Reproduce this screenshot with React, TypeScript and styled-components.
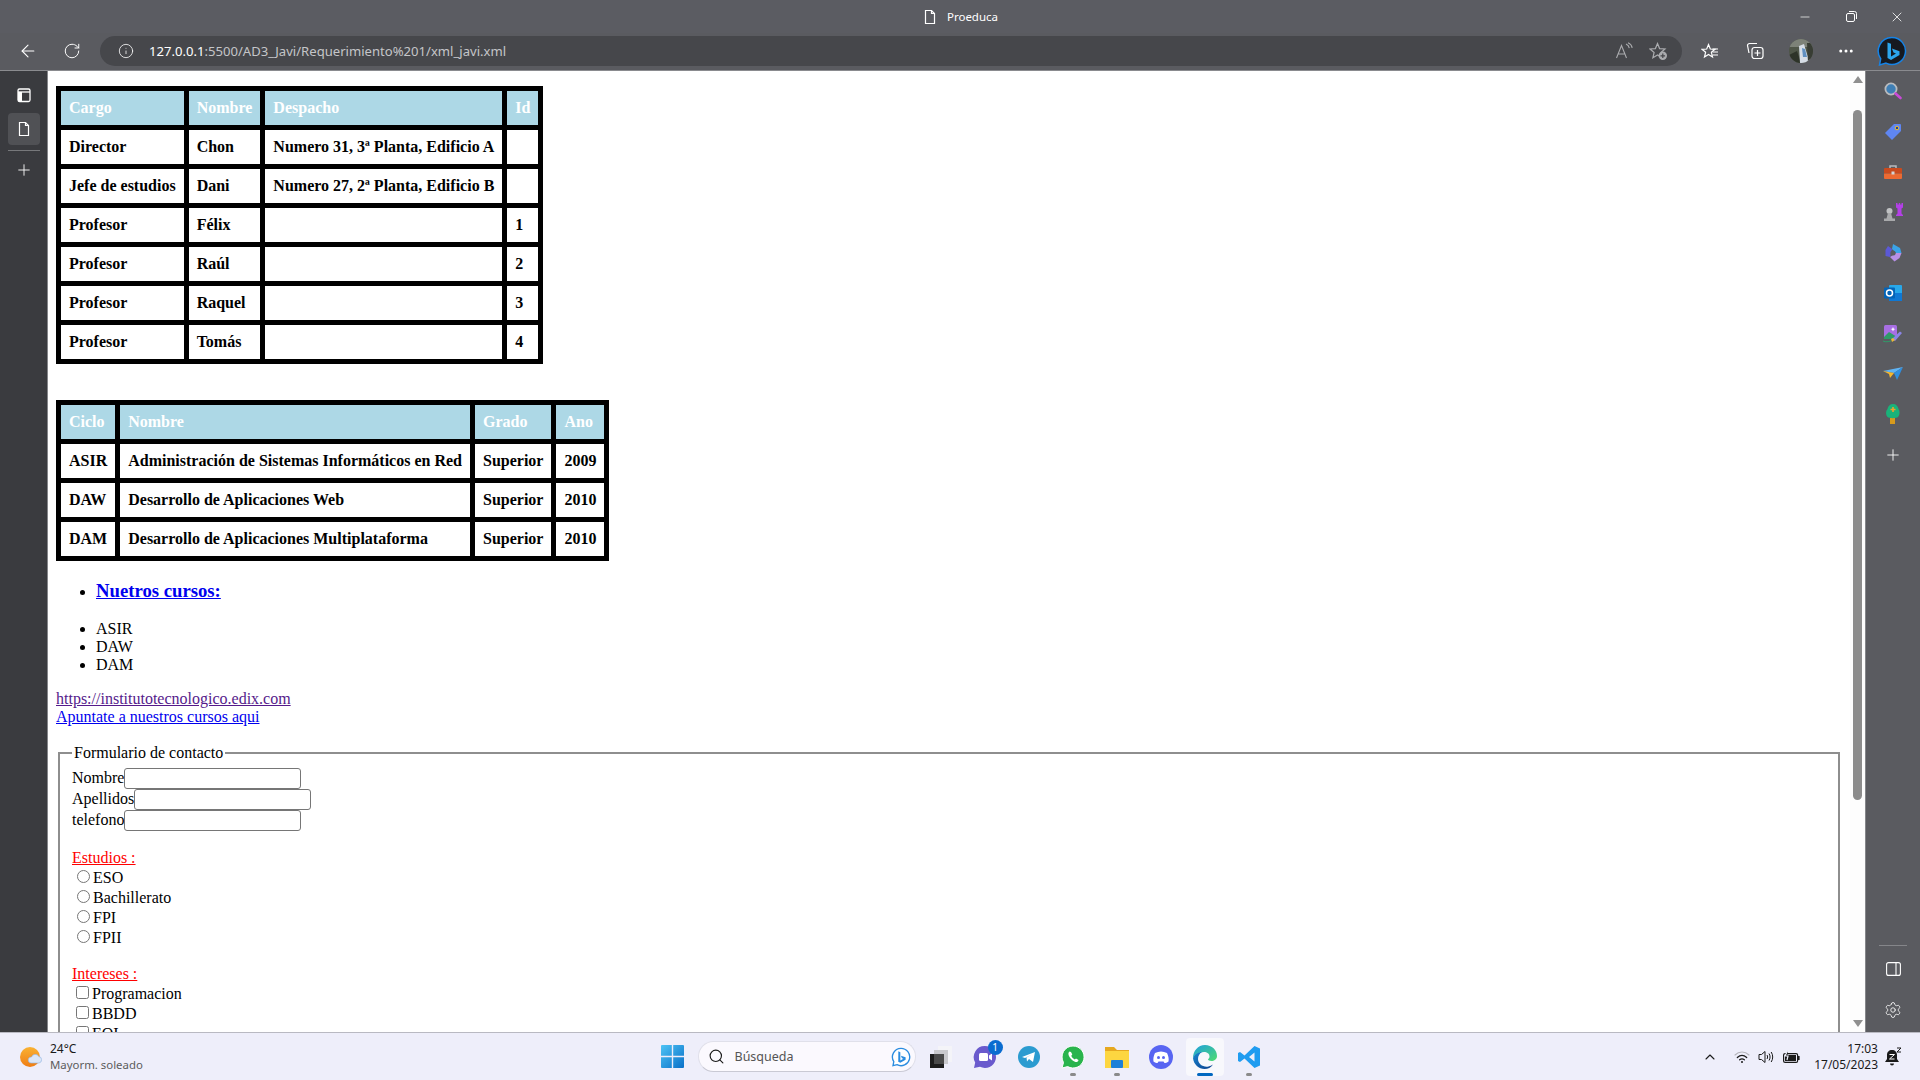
import React from 'react';
import styled, {createGlobalStyle} from 'styled-components';
import {ArrowLeft, RotateCw, Info, Plus, Minus, X, Settings, Search, ChevronUp, MoreHorizontal} from 'lucide-react';

const GlobalStyle = createGlobalStyle`
  html, body {
    margin: 0;
    height: 100%;
    overflow: hidden;
    background: #fff;
  }
`

const Screen = styled.div`
  display: flex;
  flex-direction: column;
  width: 1920px;
  height: 1080px;
  overflow: hidden;
  font-family: "Noto Sans", "Open Sans", sans-serif;
`
const TitleBar = styled.div`
  display: grid;
  grid-template-columns: 1fr auto 1fr;
  align-items: center;
  height: 33px;
  flex: none;
  background: #5b5c62;
  color: #fff;
  font-size: 11.5px;
`
const PageTitle = styled.div`
  grid-column: 2;
  display: flex;
  align-items: center;
  gap: 9px;
`
const WindowButtons = styled.div`
  justify-self: end;
  display: flex;
  align-items: center;
`
const WindowButton = styled.div`
  width: 46px;
  display: flex;
  justify-content: center;
`
const Toolbar = styled.div`
  display: flex;
  align-items: center;
  height: 38px;
  flex: none;
  box-sizing: border-box;
  padding: 0 0 1px 6px;
  background: #5a5b60;
  border-bottom: 1px solid #8a8b8f;
`
const NavButton = styled.div`
  width: 44px;
  display: flex;
  justify-content: center;
  color: #fff;
`
const UrlBar = styled.div`
  display: flex;
  align-items: center;
  width: 1582px;
  height: 30px;
  margin-left: 6px;
  box-sizing: border-box;
  padding: 0 14px 0 18px;
  border-radius: 15px;
  background: #46474b;
  font-size: 13.1px;
  color: #c4c5c8;
`
const UrlHost = styled.span`
  color: #fff;
  margin-left: 15px;
`
const UrlActions = styled.div`
  margin-left: auto;
  display: flex;
  align-items: center;
  gap: 16px;
  color: #aaabae;
`
const ToolActions = styled.div`
  display: flex;
  align-items: center;
  margin-left: 5px;
`
const ToolButton = styled.div`
  width: 45.5px;
  display: flex;
  justify-content: center;
  color: #fff;
`
const Middle = styled.div`
  display: flex;
  flex: 1;
  min-height: 0;
`
const LeftRail = styled.div`
  display: flex;
  flex-direction: column;
  align-items: center;
  width: 48px;
  flex: none;
  box-sizing: border-box;
  padding-top: 8px;
  background: #3a3b3f;
  border-right: 1px solid #85868a;
  color: #fff;
`
const RailTab = styled.div<{$active?: boolean}>`
  display: flex;
  align-items: center;
  justify-content: center;
  width: 32px;
  height: 32px;
  border-radius: 4px;
  margin-bottom: ${p => (p.$active ? '5px' : '2px')};
  background: ${p => (p.$active ? '#505155' : 'transparent')};
`
const RailDivider = styled.div`
  width: 32px;
  height: 1px;
  background: #77787b;
  margin-bottom: 10px;
`
const Page = styled.div`
  flex: 1;
  min-width: 0;
  box-sizing: border-box;
  padding: 15px 8px;
  overflow: hidden;
  background: #fff;
  color: #000;
  font-family: "Liberation Serif", "Times New Roman", serif;
  font-size: 16px;
`
const DataTable = styled.table`
  border-collapse: separate;
  border-spacing: 5px;
  background: #000;
`
const HeadCell = styled.th`
  padding: 8px;
  background: #add8e6;
  color: #fff;
  text-align: left;
`
const BodyCell = styled.td`
  padding: 8px;
  height: 18px;
  background: #fff;
  font-weight: bold;
`
const CourseList = styled.ul<{$flush?: boolean}>`
  margin: ${p => (p.$flush ? '16px 0 0' : '16px 0')};
  padding-left: 40px;
`
const CourseHeading = styled.h3`
  margin: 18.72px 0;
  font-size: 18.72px;
`
const PlainLink = styled.a<{$visited?: boolean}>`
  color: ${p => (p.$visited ? '#551a8b' : '#0000ee')};
  text-decoration: underline;
`
const ContactForm = styled.fieldset`
  margin: 0 2px;
  padding: 5.6px 12px 10px;
  border: 2px solid #8e8e8e;
`
const TextField = styled.input`
  width: 177px;
  height: 21px;
  box-sizing: border-box;
  padding: 1px 2px;
  margin: 0;
  border: 1px solid #767676;
  border-radius: 3px;
  font: 13.33px "Liberation Sans", sans-serif;
`
const SectionTitle = styled.div`
  color: #ff0000;
  text-decoration: underline;
`
const Option = styled.label`
  display: block;
`

const RightRail = styled.div`
  display: flex;
  flex-direction: column;
  align-items: center;
  width: 55px;
  flex: none;
  box-sizing: border-box;
  padding: 0 0 2px 0;
  background: #5a5b60;
  border-left: 1px solid #85868a;
  color: #fff;
`
const RailIcon = styled.div`
  display: flex;
  justify-content: center;
  align-items: center;
  height: 40.4px;
  width: 100%;
`
const RailSpacer = styled.div`
  flex: 1;
`
const RailRule = styled.div`
  width: 28px;
  height: 1px;
  background: #85868a;
  margin-bottom: 3px;
`
const ScrollTrack = styled.div`
  display: flex;
  flex-direction: column;
  align-items: center;
  width: 15px;
  flex: none;
  background: #fdfdfd;
`
const ArrowUp = styled.div`
  width: 0;
  height: 0;
  margin-top: 5px;
  border-left: 5px solid transparent;
  border-right: 5px solid transparent;
  border-bottom: 7px solid #8f8f8f;
`
const ArrowDown = styled.div`
  width: 0;
  height: 0;
  margin-top: auto;
  margin-bottom: 5px;
  border-left: 5px solid transparent;
  border-right: 5px solid transparent;
  border-top: 7px solid #8f8f8f;
`
const Thumb = styled.div`
  width: 9px;
  height: 690px;
  margin-top: 27px;
  border-radius: 5px;
  background: #8c8c8c;
`

const Taskbar = styled.div`
  display: grid;
  grid-template-columns: 1fr auto 1fr;
  align-items: center;
  height: 48px;
  flex: none;
  box-sizing: border-box;
  background: #eeeefa;
  border-top: 1px solid #b9b9c2;
  font-size: 12px;
  color: #1a1a1a;
`
const Weather = styled.div`
  display: flex;
  align-items: center;
  gap: 8px;
  padding-left: 20px;
`
const WeatherText = styled.div`
  line-height: 16px;
`
const WeatherNote = styled.div`
  color: #5c5c5c;
  font-size: 11.4px;
`
const TaskCenter = styled.div`
  display: flex;
  align-items: center;
  padding-left: 3.5px;
`
const StartButton = styled.div`
  display: flex;
  width: 38px;
  margin-right: 6.5px;
  justify-content: center;
`
const SearchBox = styled.div`
  display: flex;
  align-items: center;
  width: 218px;
  height: 31px;
  box-sizing: border-box;
  margin: 0 3px 0 0;
  padding: 0 4px 0 9px;
  border-radius: 16px;
  background: #fbf9fe;
  border: 1px solid #e0e0ea;
  border-bottom-color: #c9c9d4;
  color: #555;
  font-size: 12.5px;
  gap: 10px;
`
const SearchBing = styled.div`
  margin-left: auto;
  display: flex;
`
const TaskIcon = styled.div<{$active?: boolean}>`
  position: relative;
  display: flex;
  align-items: center;
  justify-content: center;
  width: 38px;
  height: 38px;
  margin: 0 3px;
  border-radius: 4px;
  background: ${p => (p.$active ? '#f8f8fc' : 'transparent')};
`
const Indicator = styled.div<{$active?: boolean}>`
  position: absolute;
  bottom: 0;
  left: 50%;
  transform: translateX(-50%);
  width: ${p => (p.$active ? '16px' : '6px')};
  height: 3px;
  border-radius: 2px;
  background: ${p => (p.$active ? '#0067c0' : '#8a8a8a')};
`
const CountBadge = styled.div`
  position: absolute;
  top: 2px;
  right: 1px;
  width: 15px;
  height: 15px;
  border-radius: 50%;
  background: #0a6cd0;
  color: #fff;
  font-size: 10px;
  line-height: 15px;
  text-align: center;
`
const Tray = styled.div`
  justify-self: end;
  display: flex;
  align-items: center;
  padding-right: 18px;
`
const TrayIcons = styled.div`
  display: flex;
  align-items: center;
  gap: 8px;
  margin-right: 14px;
  color: #1a1a1a;
`
const TrayChevron = styled.div`
  display: flex;
  margin-right: 8px;
`
const Clock = styled.div`
  text-align: right;
  line-height: 16px;
  margin-right: 6px;
`

const DocIcon = ({color = '#fff'}: {color?: string}) => (
	<svg width="16" height="16" viewBox="0 0 16 16" fill="none" stroke={color} strokeWidth="1.2">
		<path d="M3.5 1.5h6l3 3v10h-9z"/>
		<path d="M9.5 1.5v3h3"/>
	</svg>
)
const TabsIcon = () => (
	<svg width="16" height="16" viewBox="0 0 16 16" fill="none" stroke="#fff" strokeWidth="1.3">
		<rect x="2" y="2" width="12" height="12.5" rx="1.5"/>
		<rect x="2" y="5" width="4" height="9.5" fill="#fff" stroke="none"/>
		<path d="M2 5h12"/>
	</svg>
)
const RestoreIcon = () => (
	<svg width="11" height="11" viewBox="0 0 11 11" fill="none" stroke="#fff" strokeWidth="1">
		<rect x="0.5" y="2.5" width="8" height="8" rx="1.5"/>
		<path d="M3 .5h5.5a2 2 0 0 1 2 2V8"/>
	</svg>
)
const ReadAloudIcon = () => (
	<svg width="18" height="18" viewBox="0 0 18 18" fill="none" stroke="currentColor" strokeWidth="1.1">
		<path d="M1.5 16 6.5 3.5 11.5 16M3.2 12h6.6"/>
		<path d="M11 2c2 .8 3 2.2 3.3 4.2M13 .8c2.4 1 3.8 2.6 4.2 5"/>
	</svg>
)
const StarAddIcon = () => (
	<svg width="19" height="19" viewBox="0 0 19 19" fill="none" stroke="currentColor" strokeWidth="1.2">
		<path d="M8.5 1.5 10.6 6.6l5.4.4-4.1 3.5 1.2 5.2-4.6-2.8-4.6 2.8 1.2-5.2L1 7l5.4-.4z"/>
		<circle cx="13.8" cy="13.8" r="4.2" fill="#aaabae" stroke="none"/>
		<path d="M13.8 11.5v4.6M11.5 13.8h4.6" stroke="#46474b"/>
	</svg>
)
const FavoritesIcon = () => (
	<svg width="18" height="18" viewBox="0 0 18 18" fill="none" stroke="#fff" strokeWidth="1.2">
		<path d="M7.5 1.5 9.3 6l4.7.3-3.6 3 1.1 4.6-4-2.5-4 2.5 1.1-4.6-3.6-3L5.7 6z" transform="translate(0 1)"/>
		<path d="M11.5 7h5.5M11.5 10h5.5M11.5 13h5.5"/>
	</svg>
)
const CollectionsIcon = () => (
	<svg width="18" height="18" viewBox="0 0 18 18" fill="none" stroke="#fff" strokeWidth="1.2">
		<path d="M11 1.5H3.5a2 2 0 0 0-2 2L3 11"/>
		<rect x="6" y="5.5" width="11" height="11" rx="2.5"/>
		<path d="M11.5 8v6M8.5 11h6"/>
	</svg>
)
const Avatar = () => (
	<svg width="24" height="24" viewBox="0 0 24 24">
		<defs>
			<clipPath id="avatarClip"><circle cx="12" cy="12" r="12"/></clipPath>
		</defs>
		<g clipPath="url(#avatarClip)">
			<rect width="24" height="24" fill="#4f5648"/>
			<rect width="24" height="8" fill="#7d8278"/>
			<path d="M0 16 8 12 12 24H0z" fill="#2e3429"/>
			<path d="M10 7l5-2 3 10 4 9H11z" fill="#d6dde6"/>
			<path d="M13 9l3 1 2 8h-4z" fill="#5f8fc0"/>
			<path d="M18 4h6v20h-5z" fill="#383d34"/>
		</g>
	</svg>
)
const BingMark = ({size = 30}: {size?: number}) => (
	<svg width={size} height={size} viewBox="0 0 30 30">
		<path d="M15 1.5a13.5 13.5 0 1 1-6 25.6L2.5 29l1.2-6.3A13.5 13.5 0 0 1 15 1.5z" fill="#16191f" stroke="#1683e6" strokeWidth="1.5"/>
		<path d="M10.5 6.5 14 7.8v12.6l5-2.8-2.5-1.2-1.6-3.8 7.6 2.6v3.8l-8.5 5-3.5-2z" fill="#2ca5ec"/>
	</svg>
)
const BingOutline = () => (
	<svg width="20" height="20" viewBox="0 0 30 30">
		<path d="M15 2a13 13 0 1 1-6 24.5L3 28l1.2-6A13 13 0 0 1 15 2z" fill="#fff" stroke="#2a8ce0" strokeWidth="2"/>
		<path d="M11 6.5 14 7.8v12.6l4.6-2.6-2.2-1-1.5-3.8 7 2.5v3.5l-8 4.7-3-1.7z" fill="#2a8ce0"/>
	</svg>
)

const SearchColor = () => (
	<svg width="18" height="18" viewBox="0 0 18 18">
		<circle cx="7" cy="7" r="5.6" fill="#3f7fb5" stroke="#b9bbbe" strokeWidth="1.8"/>
		<path d="M11.5 11.5 16.5 16" stroke="#c94ad8" strokeWidth="2.6" strokeLinecap="round"/>
	</svg>
)
const TagColor = () => (
	<svg width="18" height="18" viewBox="0 0 18 18">
		<path d="M10 1h6a1 1 0 0 1 1 1v6L8 17 1 10z" fill="#5f86f2"/>
		<circle cx="13" cy="5" r="1.8" fill="#1c3fa8" stroke="#f4c321" strokeWidth="1"/>
	</svg>
)
const ToolboxColor = () => (
	<svg width="18" height="16" viewBox="0 0 18 16">
		<path d="M6 4V2h6v2" fill="none" stroke="#b8babd" strokeWidth="1.5"/>
		<rect y="4" width="18" height="5.5" rx="1" fill="#c94a1e"/>
		<path d="M0 9.5h18V14a1 1 0 0 1-1 1H1a1 1 0 0 1-1-1z" fill="#ec6a32"/>
		<rect x="7.5" y="7.5" width="3" height="3" fill="#d3d4d6"/>
	</svg>
)
const ChessColor = () => (
	<svg width="20" height="20" viewBox="0 0 20 20">
		<path d="M13 1h1.5v1.6h1.3V1h1.4v1.6h1.3V1H20v4.5l-1.5 1v5l1.5 1.5v1h-7v-1l1.5-1.5v-5l-1.5-1z" fill="#b43fe8"/>
		<circle cx="6.5" cy="9" r="3" fill="#c0c1c3"/>
		<path d="M5 11h3l1.5 5.5H3.5zM1 16.5h11V19H1z" fill="#a8a9ab"/>
	</svg>
)
const CopilotColor = () => (
	<svg width="18" height="18" viewBox="0 0 18 18">
		<path d="M9 0 16 4 17.5 9H12L8 5z" fill="#3aa3e8"/>
		<path d="M4 2 8 5 6 13 1.5 12V6z" fill="#5b59d6"/>
		<path d="M6 13 12 9h5.5l-2 5-5 3.5z" fill="#b78fe6"/>
		<circle cx="9" cy="9" r="2.6" fill="#5a5b60"/>
	</svg>
)
const OutlookColor = () => (
	<svg width="18" height="18" viewBox="0 0 18 18">
		<rect x="5" y="1" width="13" height="16" rx="1" fill="#28a8ea"/>
		<path d="M5 9h13v8H5z" fill="#0f78d4"/>
		<rect y="3.5" width="11" height="11" rx="1" fill="#0364b8"/>
		<circle cx="5.5" cy="9" r="3" fill="none" stroke="#fff" strokeWidth="1.5"/>
	</svg>
)
const ImageColor = () => (
	<svg width="20" height="20" viewBox="0 0 20 20">
		<rect x="1" y="1" width="13" height="14" rx="1.5" fill="#a86fe4"/>
		<path d="M1 13 6 8l8 5v2H1z" fill="#2f9b68"/>
		<path d="M10 3l.8 1.7L12.5 5l-1.7.8L10 7.5 9.2 5.8 7.5 5l1.7-.3z" fill="#fff"/>
		<path d="M9 15 17 7.5l2 1.5-7 8z" fill="#8b85e8"/>
		<path d="M8 15l2-1 2 2-3 2z" fill="#e8b93a"/>
		<path d="M0 17c3 1.500 5 .5 8 0" stroke="#2f9b68" fill="none"/>
	</svg>
)
const SendColor = () => (
	<svg width="20" height="16" viewBox="0 0 20 16">
		<path d="M0 5 20 1 11 7z" fill="#5fb4f5"/>
		<path d="M20 1 14 14 11 7z" fill="#2f8fe0"/>
		<path d="M0 5 11 7 7 12 6 8z" fill="#f5b82e"/>
	</svg>
)
const TreeColor = () => (
	<svg width="16" height="22" viewBox="0 0 16 22">
		<rect x="5" y="15" width="5" height="6" fill="#d79a1c"/>
		<path d="M8 1c3 0 5 2 5.500 5 1.500 2 1.500 6-.5 8-1.500 1.500-9 1.500-10.500 0C.5 12 .5 8 2.500 6 3 3 5 1 8 1z" fill="#19b37a"/>
		<path d="M8 4v5M5.500 6.500h5" stroke="#f0a22c" strokeWidth="1.600"/>
	</svg>
)
const PanelIcon = () => (
	<svg width="15" height="14" viewBox="0 0 15 14" fill="none" stroke="#fff" strokeWidth="1.100">
		<rect x=".6" y=".6" width="13.800" height="12.800" rx="2"/>
		<path d="M10 .6v12.800"/>
	</svg>
)

const WeatherIcon = () => (
	<svg width="22" height="22" viewBox="0 0 22 22">
		<defs>
			<linearGradient id="sunGrad" x1="0" y1="0" x2="0" y2="1">
				<stop offset="0" stopColor="#f9b233"/>
				<stop offset="1" stopColor="#ef7d14"/>
			</linearGradient>
		</defs>
		<circle cx="10" cy="11" r="10" fill="url(#sunGrad)"/>
		<path d="M11 17a3 3 0 0 1 .5-6 4 4 0 0 1 7.300-.5A3.300 3.300 0 0 1 19 17z" fill="#dbe6f7" stroke="#8fb1e0" strokeWidth=".6"/>
	</svg>
)
const WindowsLogo = () => (
	<svg width="23" height="23" viewBox="0 0 23 23">
		<defs>
			<linearGradient id="startGrad" x1="0" y1="0" x2="1" y2="1">
				<stop offset="0" stopColor="#4dc3f5"/>
				<stop offset="1" stopColor="#0a70c8"/>
			</linearGradient>
		</defs>
		<path d="M1 0h9.800v10.800H0V1a1 1 0 0 1 1-1zM12.200 0H22a1 1 0 0 1 1 1v9.800H12.200zM0 12.200h10.800V23H1a1 1 0 0 1-1-1zM12.200 12.200H23V22a1 1 0 0 1-1 1h-9.800z" fill="url(#startGrad)"/>
	</svg>
)
const TaskViewIcon = () => (
	<svg width="24" height="24" viewBox="0 0 24 24">
		<rect x="9" y="1" width="14" height="16" fill="#f4f4f8"/>
		<rect x="5" y="5" width="14" height="14" fill="#c9c9cd"/>
		<rect x="1" y="9" width="14" height="14" fill="#1c1c1c"/>
		<rect x="5" y="9" width="10" height="10" fill="#4a4a4a"/>
	</svg>
)
const MeetIcon = () => (
	<svg width="24" height="24" viewBox="0 0 24 24">
		<path d="M12 1a11 11 0 1 1-5 20.800L1 23l1.200-5.500A11 11 0 0 1 12 1z" fill="#6a5acd"/>
		<rect x="6" y="8" width="9" height="8" rx="1.500" fill="#fff"/>
		<path d="M16 10.500 19 8.500v7l-3-2z" fill="#fff"/>
	</svg>
)
const TelegramIcon = () => (
	<svg width="24" height="24" viewBox="0 0 24 24">
		<circle cx="12" cy="12" r="11" fill="#2b9bd0"/>
		<path d="M5 12 18 7l-2 10-4-3-2 2.500-.5-4L15 9.500 8 13z" fill="#fff"/>
	</svg>
)
const WhatsappIcon = () => (
	<svg width="24" height="24" viewBox="0 0 24 24">
		<path d="M12 1a11 11 0 1 1-5.300 20.600L1 23l1.500-5.500A11 11 0 0 1 12 1z" fill="#29b44d" stroke="#fff"/>
		<path d="M8.500 6.500c-1.500 1-1.500 3 0 5.500s4 4.500 6 5c1.500.3 3-.8 3-2l-2.500-1.500-1.200 1c-1.500-.5-3-2.200-3.500-3.700l1-1.200L10 7z" fill="#fff"/>
	</svg>
)
const FolderIcon = () => (
	<svg width="24" height="24" viewBox="0 0 24 24">
		<path d="M0 2h9l3 3h12v18H0z" fill="#e6a81f"/>
		<rect y="6" width="24" height="17" fill="#fdd640"/>
		<rect x="6" y="15" width="12" height="8" rx="1" fill="#1e80d8"/>
	</svg>
)
const DiscordIcon = () => (
	<svg width="24" height="24" viewBox="0 0 24 24">
		<circle cx="12" cy="12" r="12" fill="#5865f2"/>
		<path d="M6 8c4-2 8-2 12 0 1.500 3 2 6 1.500 8.500-1.500 1-3 1.500-4 1.500l-1-1.500h-5l-1 1.500c-1 0-2.500-.5-4-1.500C4 14 4.500 11 6 8z" fill="#fff"/>
		<circle cx="9.500" cy="12.500" r="1.500" fill="#5865f2"/>
		<circle cx="14.500" cy="12.500" r="1.500" fill="#5865f2"/>
	</svg>
)
const EdgeIcon = () => (
	<svg width="24" height="24" viewBox="0 0 24 24">
		<defs>
			<linearGradient id="edgeTop" x1="0" y1="0" x2="1" y2="1">
				<stop offset="0" stopColor="#1f9fe0"/>
				<stop offset="1" stopColor="#4fdc6e"/>
			</linearGradient>
			<linearGradient id="edgeLow" x1="0" y1="0" x2="1" y2="1">
				<stop offset="0" stopColor="#1a86d0"/>
				<stop offset="1" stopColor="#0b3f8c"/>
			</linearGradient>
		</defs>
		<path d="M12 0c7 0 12 5 12 11 0 3.500-3 5-5.500 5-2 0-3.500-.8-3.500-1.500 0-.6 1.500-1 1.500-3C16.500 8.500 14 7 11 7 6 7 1.500 10 0 13 0 6 5 0 12 0z" fill="url(#edgeTop)"/>
		<path d="M0 13c1.500-3.500 5-6 9-6-2.500 1.500-4 4-4 7 0 5 5 8.500 10.500 7.500 1.500-.3 3-1 4.500-2-2 3-5 4.500-8.500 4.500C6 24 .5 19.500 0 13z" fill="url(#edgeLow)"/>
	</svg>
)
const VsCodeIcon = () => (
	<svg width="24" height="24" viewBox="0 0 24 24">
		<path d="M17.500 1 23 3.500v17L17.500 23 7.500 13.500 3 17l-2-1V8l2-1 4.500 3.500zM17.500 7.500 12 12l5.500 4.500z" fill="#1f9cf0"/>
	</svg>
)
const WifiIcon = () => (
	<svg width="16" height="14" viewBox="0 0 16 14" fill="none" strokeLinecap="round">
		<path d="M1 5c4-4 10-4 14 0" stroke="#b5b5bb" strokeWidth="1.100"/>
		<path d="M3.300 7.500c3-2.600 6.400-2.600 9.400 0M5.600 9.800c1.500-1.200 3.300-1.200 4.800 0" stroke="#1a1a1a" strokeWidth="1.200"/>
		<circle cx="8" cy="12" r="1" fill="#1a1a1a"/>
	</svg>
)
const SpeakerIcon = () => (
	<svg width="17" height="14" viewBox="0 0 17 14" fill="none" stroke="#1a1a1a" strokeWidth="1">
		<path d="M1 4.500h2.500L7 1.500v11l-3.500-3H1z"/>
		<path d="M9 5c.8 1.200.8 2.800 0 4M11 3.500c1.400 2 1.400 5 0 7M13.200 2c2 3 2 7 0 10"/>
	</svg>
)
const BatteryIcon = () => (
	<svg width="17" height="14" viewBox="0 0 17 14">
		<rect x=".6" y="3.600" width="14" height="8.800" rx="1.500" fill="none" stroke="#1a1a1a" strokeWidth="1.200"/>
		<rect x="2" y="5" width="11" height="6" fill="#1a1a1a"/>
		<rect x="15" y="6" width="1.600" height="4" fill="#1a1a1a"/>
		<path d="M5 0 2 6h3l-1 4" stroke="#eceef9" strokeWidth="1.200" fill="#1a1a1a"/>
	</svg>
)
const BellIcon = () => (
	<svg width="18" height="20" viewBox="0 0 18 20">
		<path d="M8 3c3 0 5 2 5 5v4l2 3H1l2-3V8c0-3 2-5 5-5z" fill="#1a1a1a"/>
		<path d="M6 16.500h4a2 2 0 0 1-4 0z" fill="#1a1a1a"/>
		<path d="M5.500 7.500h5l-5 4.500h5" stroke="#fff" fill="none"/>
		<path d="M13 1h4l-4 4h4" stroke="#1a1a1a" fill="none"/>
	</svg>
)

const staff = [
	['Director', 'Chon', 'Numero 31, 3ª Planta, Edificio A', ''],
	['Jefe de estudios', 'Dani', 'Numero 27, 2ª Planta, Edificio B', ''],
	['Profesor', 'Félix', '', '1'],
	['Profesor', 'Raúl', '', '2'],
	['Profesor', 'Raquel', '', '3'],
	['Profesor', 'Tomás', '', '4'],
]
const cycles = [
	['ASIR', 'Administración de Sistemas Informáticos en Red', 'Superior', '2009'],
	['DAW', 'Desarrollo de Aplicaciones Web', 'Superior', '2010'],
	['DAM', 'Desarrollo de Aplicaciones Multiplataforma', 'Superior', '2010'],
]

const renderTable = (head: string[], rows: string[][]) => (
	<DataTable>
		<thead>
			<tr>{head.map((h) => <HeadCell key={h}>{h}</HeadCell>)}</tr>
		</thead>
		<tbody>
			{rows.map((row, i) => (
				<tr key={i}>
					{row.map((cell, j) => <BodyCell key={j}>{cell}</BodyCell>)}
				</tr>
			))}
		</tbody>
	</DataTable>
)

const App = () => {
	return (
		<Screen>
			<GlobalStyle/>
			<TitleBar>
				<PageTitle><DocIcon/>Proeduca</PageTitle>
				<WindowButtons>
					<WindowButton><Minus size={14} strokeWidth={1.2} color="#fff"/></WindowButton>
					<WindowButton><RestoreIcon/></WindowButton>
					<WindowButton><X size={16} strokeWidth={1.2} color="#fff"/></WindowButton>
				</WindowButtons>
			</TitleBar>
			<Toolbar>
				<NavButton><ArrowLeft size={20} strokeWidth={1.3}/></NavButton>
				<NavButton><RotateCw size={18} strokeWidth={1.3}/></NavButton>
				<UrlBar>
					<Info size={16} strokeWidth={1.2} color="#fff"/>
					<UrlHost>127.0.0.1</UrlHost>:5500/AD3_Javi/Requerimiento%201/xml_javi.xml
					<UrlActions><ReadAloudIcon/><StarAddIcon/></UrlActions>
				</UrlBar>
				<ToolActions>
					<ToolButton><FavoritesIcon/></ToolButton>
					<ToolButton><CollectionsIcon/></ToolButton>
					<ToolButton><Avatar/></ToolButton>
					<ToolButton><MoreHorizontal size={18} strokeWidth={2}/></ToolButton>
					<ToolButton><BingMark/></ToolButton>
				</ToolActions>
			</Toolbar>
			<Middle>
				<LeftRail>
					<RailTab><TabsIcon/></RailTab>
					<RailTab $active><DocIcon/></RailTab>
					<RailDivider/>
					<Plus size={18} strokeWidth={1.2}/>
				</LeftRail>
				<Page>
					{renderTable(['Cargo', 'Nombre', 'Despacho', 'Id'], staff)}
					<br/><br/>
					{renderTable(['Ciclo', 'Nombre', 'Grado', 'Ano'], cycles)}
					<CourseList $flush>
						<li><CourseHeading><PlainLink href="#cursos">Nuetros cursos:</PlainLink></CourseHeading></li>
					</CourseList>
					<CourseList>
						<li>ASIR</li>
						<li>DAW</li>
						<li>DAM</li>
					</CourseList>
					<PlainLink $visited href="#edix">https://institutotecnologico.edix.com</PlainLink>
					<br/>
					<PlainLink href="#apuntate">Apuntate a nuestros cursos aqui</PlainLink>
					<br/><br/>
					<ContactForm>
						<legend>Formulario de contacto</legend>
						<div>Nombre<TextField/></div>
						<div>Apellidos<TextField/></div>
						<div>telefono<TextField/></div>
						<br/>
						<SectionTitle>Estudios :</SectionTitle>
						<Option><input type="radio" name="estudios"/>ESO</Option>
						<Option><input type="radio" name="estudios"/>Bachillerato</Option>
						<Option><input type="radio" name="estudios"/>FPI</Option>
						<Option><input type="radio" name="estudios"/>FPII</Option>
						<br/>
						<SectionTitle>Intereses :</SectionTitle>
						<Option><input type="checkbox"/>Programacion</Option>
						<Option><input type="checkbox"/>BBDD</Option>
						<Option><input type="checkbox"/>EOI</Option>
					</ContactForm>
				</Page>
				<ScrollTrack>
					<ArrowUp/>
					<Thumb/>
					<ArrowDown/>
				</ScrollTrack>
				<RightRail>
					<RailIcon><SearchColor/></RailIcon>
					<RailIcon><TagColor/></RailIcon>
					<RailIcon><ToolboxColor/></RailIcon>
					<RailIcon><ChessColor/></RailIcon>
					<RailIcon><CopilotColor/></RailIcon>
					<RailIcon><OutlookColor/></RailIcon>
					<RailIcon><ImageColor/></RailIcon>
					<RailIcon><SendColor/></RailIcon>
					<RailIcon><TreeColor/></RailIcon>
					<RailIcon><Plus size={18} strokeWidth={1.2}/></RailIcon>
					<RailSpacer/>
					<RailRule/>
					<RailIcon><PanelIcon/></RailIcon>
					<RailIcon><Settings size={18} strokeWidth={1.1}/></RailIcon>
				</RightRail>
			</Middle>
			<Taskbar>
				<Weather>
					<WeatherIcon/>
					<WeatherText>
						24°C
						<WeatherNote>Mayorm. soleado</WeatherNote>
					</WeatherText>
				</Weather>
				<TaskCenter>
					<StartButton><WindowsLogo/></StartButton>
					<SearchBox>
						<Search size={17} strokeWidth={1.6} color="#1a1a1a"/>
						Búsqueda
						<SearchBing><BingOutline/></SearchBing>
					</SearchBox>
					<TaskIcon><TaskViewIcon/></TaskIcon>
					<TaskIcon><MeetIcon/><CountBadge>1</CountBadge></TaskIcon>
					<TaskIcon><TelegramIcon/></TaskIcon>
					<TaskIcon><WhatsappIcon/><Indicator/></TaskIcon>
					<TaskIcon><FolderIcon/><Indicator/></TaskIcon>
					<TaskIcon><DiscordIcon/></TaskIcon>
					<TaskIcon $active><EdgeIcon/><Indicator $active/></TaskIcon>
					<TaskIcon><VsCodeIcon/><Indicator/></TaskIcon>
				</TaskCenter>
				<Tray>
					<TrayIcons>
						<TrayChevron><ChevronUp size={16} strokeWidth={1.6}/></TrayChevron>
						<WifiIcon/>
						<SpeakerIcon/>
						<BatteryIcon/>
					</TrayIcons>
					<Clock>17:03<br/>17/05/2023</Clock>
					<BellIcon/>
				</Tray>
			</Taskbar>
		</Screen>
	);
};

export default App;
